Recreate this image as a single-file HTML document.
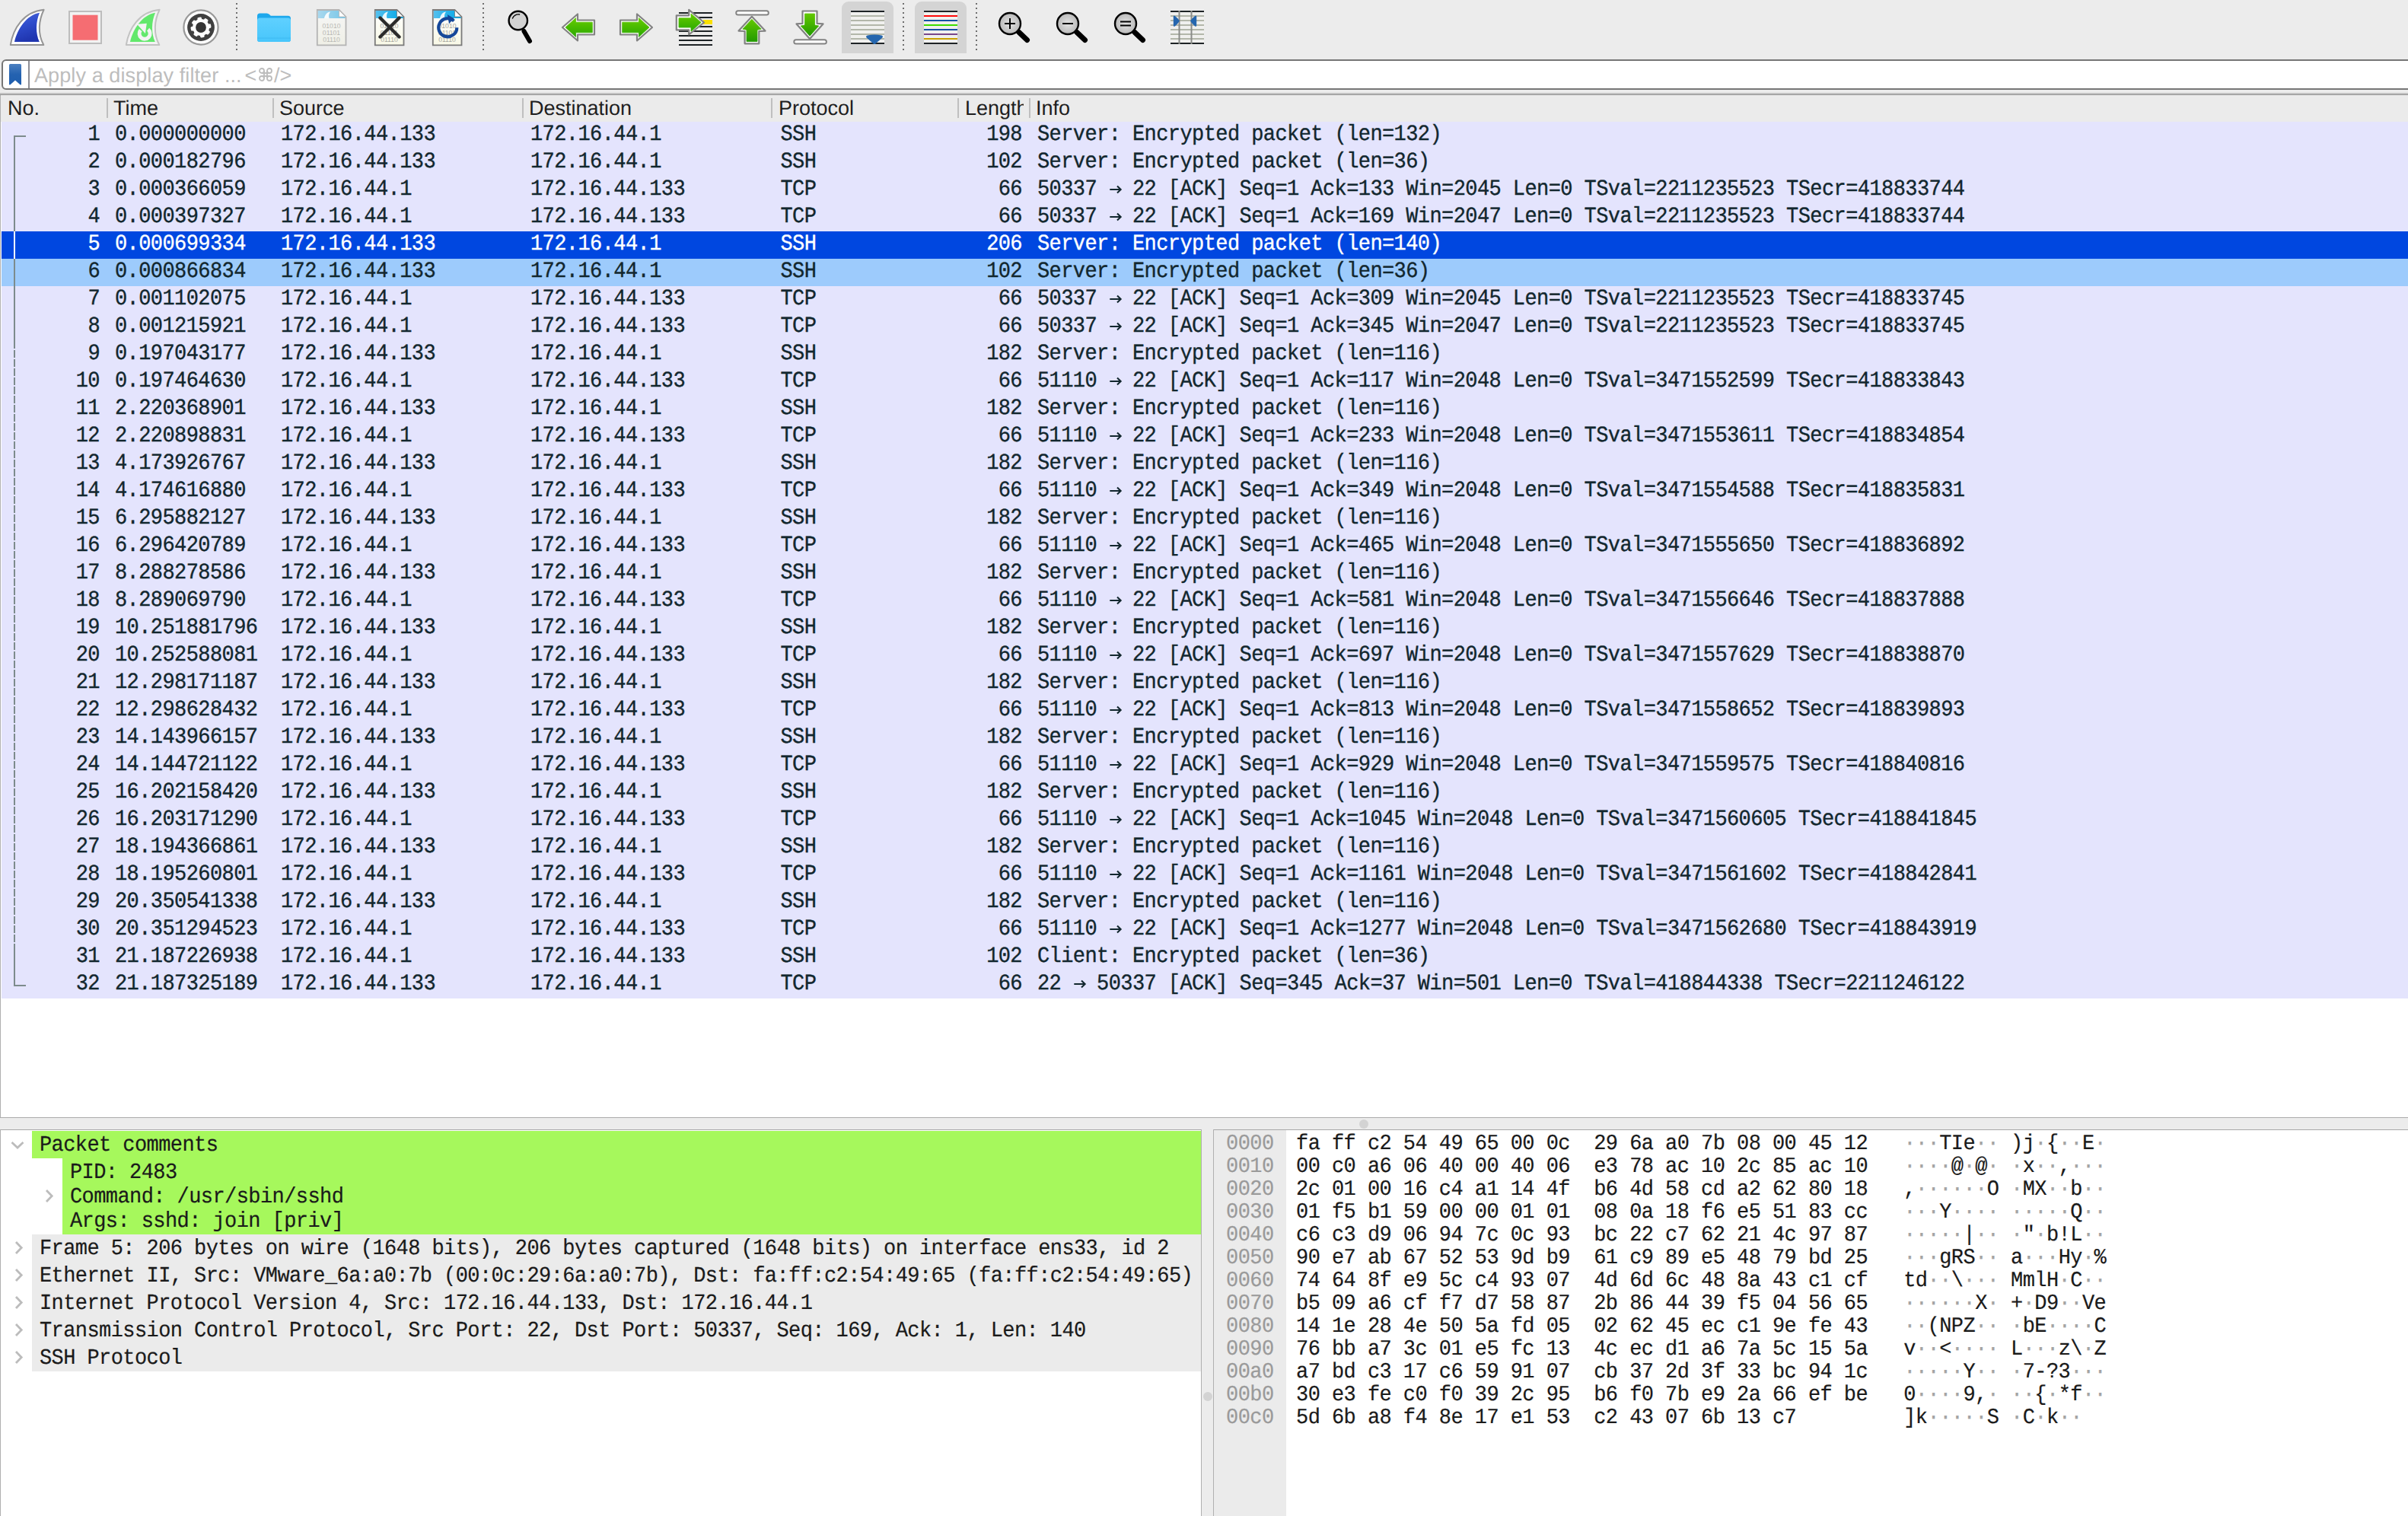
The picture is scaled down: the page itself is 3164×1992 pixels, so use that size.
<!DOCTYPE html><html><head><meta charset="utf-8"><title>Wireshark</title><style>

html,body{margin:0;padding:0;}
body{width:3164px;height:1992px;overflow:hidden;background:#ececec;position:relative;font-family:"Liberation Sans", sans-serif;text-rendering:geometricPrecision;}
.a{position:absolute;}
.t{position:absolute;white-space:pre;}
.pl{-webkit-text-stroke:0.35px currentColor;font-family:"Liberation Mono", monospace;font-size:27px;letter-spacing:-0.582px;line-height:36px;height:36px;color:#12272e;transform:scaleY(1.08);transform-origin:0 25.18px;}
.dt{-webkit-text-stroke:0.2px currentColor;font-family:"Liberation Mono", monospace;font-size:27px;letter-spacing:-0.582px;line-height:36px;height:36px;color:#1a1a1a;transform:scaleY(1.07);transform-origin:0 25.18px;}
.hx{-webkit-text-stroke:0.2px currentColor;font-family:"Liberation Mono", monospace;font-size:27px;letter-spacing:-0.552px;line-height:30px;height:30px;color:#1a1a1a;transform:scaleY(1.055);transform-origin:0 22.18px;}
.arw{position:relative;top:-3px;font-weight:bold;}
.dot{color:#a4a4a4;}
.hd{font-family:"Liberation Sans", sans-serif;font-size:27px;line-height:36px;height:36px;color:#1e1e1e;}

</style></head><body>
<div class="a" style="left:0;top:0;width:3164px;height:78px;background:#ececec;"></div>
<div class="a" style="left:1106px;top:2px;width:68px;height:68px;background:#d4d4d4;border-radius:9px 9px 0 0;"></div>
<div class="a" style="left:1202px;top:2px;width:68px;height:68px;background:#d4d4d4;border-radius:9px 9px 0 0;"></div>
<svg class="a" style="left:0;top:0" width="1600" height="78" viewBox="0 0 1600 78"><defs>
<linearGradient id="gblue" x1="0" y1="0" x2="0.3" y2="1"><stop offset="0" stop-color="#4c68d8"/><stop offset="0.5" stop-color="#2e4ccc"/><stop offset="1" stop-color="#2036b0"/></linearGradient>
<linearGradient id="garrow" x1="0" y1="0" x2="0" y2="1"><stop offset="0" stop-color="#66cc00"/><stop offset="1" stop-color="#2aa800"/></linearGradient>
<linearGradient id="garrowv" x1="0" y1="0" x2="0" y2="1"><stop offset="0" stop-color="#62c800"/><stop offset="1" stop-color="#239a00"/></linearGradient>
<radialGradient id="glens" cx="0.5" cy="0.5" r="0.55"><stop offset="0" stop-color="#e4e4e4"/><stop offset="1" stop-color="#b4b4b4"/></radialGradient>
<linearGradient id="gfold" x1="0" y1="0" x2="0" y2="1"><stop offset="0" stop-color="#5fd0ff"/><stop offset="1" stop-color="#48c6fb"/></linearGradient>
<linearGradient id="gdocbody" x1="0" y1="0" x2="0" y2="1"><stop offset="0" stop-color="#ffffff"/><stop offset="1" stop-color="#f8f8e6"/></linearGradient>
<linearGradient id="gdocbody2" x1="0" y1="0" x2="0" y2="1"><stop offset="0" stop-color="#f6f6f6"/><stop offset="1" stop-color="#efefe6"/></linearGradient>
<linearGradient id="gband" x1="0" y1="0" x2="1" y2="0"><stop offset="0" stop-color="#55c0ee"/><stop offset="1" stop-color="#00a6e6"/></linearGradient>
<linearGradient id="gband2" x1="0" y1="0" x2="1" y2="0"><stop offset="0" stop-color="#a8d8ee"/><stop offset="1" stop-color="#78c6e8"/></linearGradient>
</defs><path d="M13.8,59 C17.5,37 31,15.5 57.6,12.8 C50.8,27 49.2,44 57.3,59 Z" fill="#ffffff" stroke="#959595" stroke-width="2" stroke-linejoin="round"/><path d="M19,55 C23,38 34.5,20 52,16.8 C46.8,29 46.6,44 51.8,55 Z" fill="url(#gblue)"/><rect x="91" y="15" width="42" height="42" fill="#f2f2f2" stroke="#bdbdbd" stroke-width="2"/><rect x="95.5" y="19.7" width="33" height="33" fill="#f56d72"/><path d="M165.8,59 C169.5,37 183,15.5 209.6,12.8 C202.8,27 201.2,44 209.3,59 Z" fill="#f3f3f3" stroke="#c2c2c2" stroke-width="2" stroke-linejoin="round"/><path d="M171,55 C175,38 186.5,20 204,16.8 C198.8,29 198.6,44 203.8,55 Z" fill="#62e86c"/><path d="M194.6,38.7 A7.05,7.05 0 1 1 184.7,39.6" fill="none" stroke="#f3f3f3" stroke-width="4.9"/><polygon points="180,31.8 192.8,30.8 190.9,44.1" fill="#f3f3f3"/><circle cx="264" cy="36" r="22.6" fill="#ffffff" stroke="#999999" stroke-width="2.2"/><circle cx="264" cy="36" r="17.9" fill="#404040"/><circle cx="264" cy="36" r="11.0" fill="#ffffff"/><rect x="261.2" y="22.6" width="5.6" height="7" rx="1.6" fill="#ffffff" transform="rotate(-9 264 36)"/><rect x="261.2" y="22.6" width="5.6" height="7" rx="1.6" fill="#ffffff" transform="rotate(36 264 36)"/><rect x="261.2" y="22.6" width="5.6" height="7" rx="1.6" fill="#ffffff" transform="rotate(81 264 36)"/><rect x="261.2" y="22.6" width="5.6" height="7" rx="1.6" fill="#ffffff" transform="rotate(126 264 36)"/><rect x="261.2" y="22.6" width="5.6" height="7" rx="1.6" fill="#ffffff" transform="rotate(171 264 36)"/><rect x="261.2" y="22.6" width="5.6" height="7" rx="1.6" fill="#ffffff" transform="rotate(216 264 36)"/><rect x="261.2" y="22.6" width="5.6" height="7" rx="1.6" fill="#ffffff" transform="rotate(261 264 36)"/><rect x="261.2" y="22.6" width="5.6" height="7" rx="1.6" fill="#ffffff" transform="rotate(306 264 36)"/><circle cx="264" cy="36" r="6.9" fill="#353535"/><rect x="310" y="4" width="2" height="2" fill="#6f6f6f"/><rect x="310" y="10" width="2" height="2" fill="#6f6f6f"/><rect x="310" y="16" width="2" height="2" fill="#6f6f6f"/><rect x="310" y="22" width="2" height="2" fill="#6f6f6f"/><rect x="310" y="28" width="2" height="2" fill="#6f6f6f"/><rect x="310" y="34" width="2" height="2" fill="#6f6f6f"/><rect x="310" y="40" width="2" height="2" fill="#6f6f6f"/><rect x="310" y="46" width="2" height="2" fill="#6f6f6f"/><rect x="310" y="52" width="2" height="2" fill="#6f6f6f"/><rect x="310" y="58" width="2" height="2" fill="#6f6f6f"/><rect x="310" y="64" width="2" height="2" fill="#6f6f6f"/><path d="M338,21 Q338,17.5 341.5,17.5 L350.5,17.5 Q352.5,17.5 354,19 L355.8,20.8 L378.5,20.8 Q382,20.8 382,24.3 L382,51.5 Q382,55 378.5,55 L341.5,55 Q338,55 338,51.5 Z" fill="#1ea8ec"/><path d="M338,27 Q338,23.5 341.5,23.5 L378.5,23.5 Q382,23.5 382,27 L382,51.5 Q382,55 378.5,55 L341.5,55 Q338,55 338,51.5 Z" fill="url(#gfold)"/><rect x="338" y="49.5" width="44" height="1.2" fill="#3cb8f0" opacity="0.7"/><path d="M416.8,13 L445.5,13 L454.5,22 L454.5,59.4 L416.8,59.4 Z" fill="url(#gdocbody2)" stroke="#b4b4b4" stroke-width="1.8" stroke-linejoin="miter"/><path d="M417.8,14 L445.0,14 L453.7,22.5 L453.7,24 L417.8,24 Z" fill="url(#gband2)"/><path d="M445.5,13.5 L445.5,22 L454.0,22 Z" fill="#ffffff" stroke="#b4b4b4" stroke-width="0.8"/><path d="M426,24 C427,19 430,16 434,15.5 C432,18 431.5,21 432.5,24 Z" fill="#ffffff" opacity="0.9"/><text x="435.5" y="37" font-family="Liberation Sans, sans-serif" font-size="8.6" text-anchor="middle" fill="#b8b8b4">01010</text><text x="435.5" y="46" font-family="Liberation Sans, sans-serif" font-size="8.6" text-anchor="middle" fill="#b8b8b4">01101</text><text x="435.5" y="55" font-family="Liberation Sans, sans-serif" font-size="8.6" text-anchor="middle" fill="#b8b8b4">01110</text><path d="M492.8,13 L521.5,13 L530.5,22 L530.5,59.4 L492.8,59.4 Z" fill="url(#gdocbody)" stroke="#7a7a7a" stroke-width="1.8" stroke-linejoin="miter"/><path d="M493.8,14 L521.0,14 L529.7,22.5 L529.7,24 L493.8,24 Z" fill="url(#gband)"/><path d="M521.5,13.5 L521.5,22 L530.0,22 Z" fill="#ffffff" stroke="#7a7a7a" stroke-width="0.8"/><path d="M502,24 C503,19 506,16 510,15.5 C508,18 507.5,21 508.5,24 Z" fill="#ffffff" opacity="0.9"/><text x="511.5" y="37" font-family="Liberation Sans, sans-serif" font-size="8.6" text-anchor="middle" fill="#a4a49c">01010</text><text x="511.5" y="46" font-family="Liberation Sans, sans-serif" font-size="8.6" text-anchor="middle" fill="#a4a49c">01101</text><text x="511.5" y="55" font-family="Liberation Sans, sans-serif" font-size="8.6" text-anchor="middle" fill="#a4a49c">01110</text><path d="M499.5,23.5 L524.5,48.5 M524.5,23.5 L499.5,48.5" stroke="#2b2b2b" stroke-width="4.4" stroke-linecap="round"/><path d="M568.8,13 L597.5,13 L606.5,22 L606.5,59.4 L568.8,59.4 Z" fill="url(#gdocbody)" stroke="#7a7a7a" stroke-width="1.8" stroke-linejoin="miter"/><path d="M569.8,14 L597.0,14 L605.7,22.5 L605.7,24 L569.8,24 Z" fill="url(#gband)"/><path d="M597.5,13.5 L597.5,22 L606.0,22 Z" fill="#ffffff" stroke="#7a7a7a" stroke-width="0.8"/><path d="M578,24 C579,19 582,16 586,15.5 C584,18 583.5,21 584.5,24 Z" fill="#ffffff" opacity="0.9"/><text x="587.5" y="37" font-family="Liberation Sans, sans-serif" font-size="8.6" text-anchor="middle" fill="#a4a49c">01010</text><text x="587.5" y="46" font-family="Liberation Sans, sans-serif" font-size="8.6" text-anchor="middle" fill="#a4a49c">01101</text><text x="587.5" y="55" font-family="Liberation Sans, sans-serif" font-size="8.6" text-anchor="middle" fill="#a4a49c">01110</text><path d="M596.5,27.5 A12,12 0 1 0 600.3,36.2" fill="none" stroke="#15489a" stroke-width="4.2"/><path d="M587.8,19 L596.5,24.2 L590,31.2 Z" fill="#15489a"/><rect x="634" y="4" width="2" height="2" fill="#6f6f6f"/><rect x="634" y="10" width="2" height="2" fill="#6f6f6f"/><rect x="634" y="16" width="2" height="2" fill="#6f6f6f"/><rect x="634" y="22" width="2" height="2" fill="#6f6f6f"/><rect x="634" y="28" width="2" height="2" fill="#6f6f6f"/><rect x="634" y="34" width="2" height="2" fill="#6f6f6f"/><rect x="634" y="40" width="2" height="2" fill="#6f6f6f"/><rect x="634" y="46" width="2" height="2" fill="#6f6f6f"/><rect x="634" y="52" width="2" height="2" fill="#6f6f6f"/><rect x="634" y="58" width="2" height="2" fill="#6f6f6f"/><rect x="634" y="64" width="2" height="2" fill="#6f6f6f"/><path d="M688.5,41 L696,54" stroke="#000" stroke-width="6" stroke-linecap="round"/><circle cx="680.8" cy="27" r="12.2" fill="#d2d2d2" stroke="#000" stroke-width="2.4"/><path d="M673.5,24 A8,8 0 0 1 682.5,19" fill="none" stroke="#000" stroke-width="1.4" stroke-linecap="round"/><polygon points="739.00,36.00 759.00,18.50 759.00,26.50 781.00,26.50 781.00,45.50 759.00,45.50 759.00,53.50" fill="#ffffff" stroke="#828282" stroke-width="2.2" stroke-linejoin="round"/><polygon points="743.00,36.00 756.60,23.50 756.60,29.20 778.30,29.20 778.30,42.80 756.60,42.80 756.60,48.50" fill="url(#garrow)" stroke="url(#garrow)" stroke-width="0.8" stroke-linejoin="round"/><polygon points="857.00,36.00 837.00,18.50 837.00,26.50 815.00,26.50 815.00,45.50 837.00,45.50 837.00,53.50" fill="#ffffff" stroke="#828282" stroke-width="2.2" stroke-linejoin="round"/><polygon points="853.00,36.00 839.40,23.50 839.40,29.20 817.70,29.20 817.70,42.80 839.40,42.80 839.40,48.50" fill="url(#garrow)" stroke="url(#garrow)" stroke-width="0.8" stroke-linejoin="round"/><rect x="892" y="16" width="44" height="2" fill="#1e2326"/><rect x="892" y="22" width="44" height="2" fill="#1e2326"/><rect x="892" y="28" width="44" height="2" fill="#1e2326"/><rect x="892" y="34" width="44" height="2" fill="#1e2326"/><rect x="892" y="40" width="44" height="2" fill="#1e2326"/><rect x="892" y="46" width="44" height="2" fill="#1e2326"/><rect x="892" y="52" width="44" height="2" fill="#1e2326"/><rect x="892" y="58" width="44" height="2" fill="#1e2326"/><rect x="924" y="26" width="12" height="6" fill="#f9e000"/><polygon points="888.8,20.3 905.2,20.3 905.2,12.8 925,29.5 905.2,45.5 905.2,39.4 888.8,39.4" fill="#ffffff" stroke="#828282" stroke-width="2.2" stroke-linejoin="round"/><polygon points="892,23.8 908,23.8 908,18 921.2,29.5 908,41.2 908,36 892,36" fill="url(#garrow)" stroke="url(#garrow)" stroke-width="0.8" stroke-linejoin="round"/><rect x="967.2" y="14.3" width="42.6" height="5.2" rx="2.6" fill="#ffffff" stroke="#828282" stroke-width="1.9"/><polygon points="987.9,21.8 1005.5,40.6 997.3,41 997.3,57.3 978.6,57.3 978.6,41 970.5,40.6" fill="#ffffff" stroke="#828282" stroke-width="2.2" stroke-linejoin="round"/><polygon points="987.9,25.2 1000.3,38.2 995,39.2 995,54.5 981,54.5 981,39.2 975.8,38.2" fill="url(#garrowv)" stroke="url(#garrowv)" stroke-width="0.8" stroke-linejoin="round"/><polygon points="1054.5,14.5 1073.5,14.5 1073.5,30.8 1081.5,31.4 1064,51 1046.5,31.4 1054.5,30.8" fill="#ffffff" stroke="#828282" stroke-width="2.2" stroke-linejoin="round"/><polygon points="1057.5,18 1070.5,18 1070.5,33 1075.8,34 1064,47.2 1052.2,34 1057.5,33" fill="url(#garrowv)" stroke="url(#garrowv)" stroke-width="0.8" stroke-linejoin="round"/><rect x="1043.3" y="52.3" width="42.6" height="5.2" rx="2.6" fill="#ffffff" stroke="#828282" stroke-width="1.9"/><rect x="1118" y="14" width="44" height="44" fill="#f0f0ee"/><rect x="1118" y="20" width="44" height="2" fill="#b3b7aa"/><rect x="1118" y="26" width="44" height="2" fill="#b3b7aa"/><rect x="1118" y="32" width="44" height="2" fill="#b3b7aa"/><rect x="1118" y="38" width="44" height="2" fill="#b3b7aa"/><rect x="1118" y="44" width="44" height="2" fill="#b3b7aa"/><rect x="1118" y="50" width="44" height="2" fill="#b3b7aa"/><rect x="1118" y="14" width="44" height="2" fill="#1e2326"/><rect x="1118" y="56" width="44" height="2" fill="#1e2326"/><path d="M1139.8,46.6 Q1149,44.2 1158.2,46.6 Q1161,47.6 1159.4,49.6 L1150.3,57.4 Q1149,58.6 1147.7,57.4 L1138.6,49.6 Q1137,47.6 1139.8,46.6 Z" fill="#2566ae"/><rect x="1186" y="4" width="2" height="2" fill="#6f6f6f"/><rect x="1186" y="10" width="2" height="2" fill="#6f6f6f"/><rect x="1186" y="16" width="2" height="2" fill="#6f6f6f"/><rect x="1186" y="22" width="2" height="2" fill="#6f6f6f"/><rect x="1186" y="28" width="2" height="2" fill="#6f6f6f"/><rect x="1186" y="34" width="2" height="2" fill="#6f6f6f"/><rect x="1186" y="40" width="2" height="2" fill="#6f6f6f"/><rect x="1186" y="46" width="2" height="2" fill="#6f6f6f"/><rect x="1186" y="52" width="2" height="2" fill="#6f6f6f"/><rect x="1186" y="58" width="2" height="2" fill="#6f6f6f"/><rect x="1186" y="64" width="2" height="2" fill="#6f6f6f"/><rect x="1214" y="14" width="44" height="44" fill="#f0f0ee"/><rect x="1214" y="14" width="44" height="2" fill="#1e2326"/><rect x="1214" y="20" width="44" height="2" fill="#ff0a0a"/><rect x="1214" y="26" width="44" height="2" fill="#1452a4"/><rect x="1214" y="32" width="44" height="2" fill="#3edc00"/><rect x="1214" y="38" width="44" height="2" fill="#1452a4"/><rect x="1214" y="44" width="44" height="2" fill="#7a468a"/><rect x="1214" y="50" width="44" height="2" fill="#caa000"/><rect x="1214" y="56" width="44" height="2" fill="#1e2326"/><rect x="1282" y="4" width="2" height="2" fill="#6f6f6f"/><rect x="1282" y="10" width="2" height="2" fill="#6f6f6f"/><rect x="1282" y="16" width="2" height="2" fill="#6f6f6f"/><rect x="1282" y="22" width="2" height="2" fill="#6f6f6f"/><rect x="1282" y="28" width="2" height="2" fill="#6f6f6f"/><rect x="1282" y="34" width="2" height="2" fill="#6f6f6f"/><rect x="1282" y="40" width="2" height="2" fill="#6f6f6f"/><rect x="1282" y="46" width="2" height="2" fill="#6f6f6f"/><rect x="1282" y="52" width="2" height="2" fill="#6f6f6f"/><rect x="1282" y="58" width="2" height="2" fill="#6f6f6f"/><rect x="1282" y="64" width="2" height="2" fill="#6f6f6f"/><path d="M1339,42.5 L1349.5,52.5" stroke="#000" stroke-width="7" stroke-linecap="round"/><circle cx="1327" cy="31" r="14" fill="url(#glens)" stroke="#000" stroke-width="2.4"/><path d="M1320,31 L1334,31 M1327,24 L1327,38" stroke="#000" stroke-width="2"/><path d="M1415,42.5 L1425.5,52.5" stroke="#000" stroke-width="7" stroke-linecap="round"/><circle cx="1403" cy="31" r="14" fill="url(#glens)" stroke="#000" stroke-width="2.4"/><path d="M1396,31 L1410,31" stroke="#000" stroke-width="2"/><path d="M1491,42.5 L1501.5,52.5" stroke="#000" stroke-width="7" stroke-linecap="round"/><circle cx="1479" cy="31" r="14" fill="url(#glens)" stroke="#000" stroke-width="2.4"/><path d="M1472,28.5 L1486,28.5 M1472,33.5 L1486,33.5" stroke="#000" stroke-width="2"/><rect x="1538" y="14" width="44" height="44" fill="#f0f0ee"/><rect x="1538" y="20" width="44" height="2" fill="#b3b7aa"/><rect x="1538" y="26" width="44" height="2" fill="#b3b7aa"/><rect x="1538" y="32" width="44" height="2" fill="#b3b7aa"/><rect x="1538" y="38" width="44" height="2" fill="#b3b7aa"/><rect x="1538" y="44" width="44" height="2" fill="#b3b7aa"/><rect x="1538" y="50" width="44" height="2" fill="#b3b7aa"/><rect x="1538" y="14" width="44" height="2" fill="#1e2326"/><rect x="1538" y="56" width="44" height="2" fill="#1e2326"/><rect x="1548.5" y="14" width="2" height="44" fill="#8a8c88"/><rect x="1564.5" y="14" width="2" height="44" fill="#8a8c88"/><path d="M1541.8,22.2 Q1541.8,19.8 1543.8,21 Q1547.5,23.5 1550,27.6 Q1547.5,31.8 1543.8,34.4 Q1541.8,35.6 1541.8,33.2 Z" fill="#2566ae"/><path d="M1572.2,22.2 Q1572.2,19.8 1570.2,21 Q1566.5,23.5 1564,27.6 Q1566.5,31.8 1570.2,34.4 Q1572.2,35.6 1572.2,33.2 Z" fill="#2566ae"/></svg>
<div class="a" style="left:2px;top:78px;width:3200px;height:36px;background:#fff;border:2px solid #767676;border-radius:6px;"></div>
<div class="a" style="left:37px;top:80px;width:2px;height:36px;background:#8e8e94;"></div>
<svg class="a" style="left:0;top:78px" width="40" height="40" viewBox="0 78 40 40"><defs><linearGradient id="bm" x1="0" y1="0" x2="0" y2="1"><stop offset="0" stop-color="#4b7fc0"/><stop offset="0.5" stop-color="#2462b0"/><stop offset="1" stop-color="#1f5eae"/></linearGradient></defs><path d="M12,85.5 Q12,84 13.5,84 L26.5,84 Q28,84 28,85.5 L28,110.2 Q28,112.4 26.2,111 L20,105.6 L13.8,111 Q12,112.4 12,110.2 Z" fill="url(#bm)"/></svg>
<div class="t" style="left:45px;top:80.6px;font-size:27px;line-height:36px;color:#bdbdbd;letter-spacing:0.1px;">Apply a display filter ...</div>
<div class="t" style="left:321.5px;top:80.6px;font-size:27px;line-height:36px;color:#bdbdbd;">&lt;</div>
<svg class="a" style="left:338.9px;top:88.2px" width="20" height="20" viewBox="0 0 20 20"><g fill="none" stroke="#bdbdbd" stroke-width="1.8"><circle cx="5" cy="5" r="3"/><circle cx="15" cy="5" r="3"/><circle cx="5" cy="15" r="3"/><circle cx="15" cy="15" r="3"/><path d="M8,5 V15 M12,5 V15 M5,8 H15 M5,12 H15"/></g></svg>
<div class="t" style="left:360px;top:80.6px;font-size:27px;line-height:36px;color:#bdbdbd;">/&gt;</div>
<div class="a" style="left:0;top:122px;width:3164px;height:2px;background:#c2c2c2;"></div>
<div class="a" style="left:0;top:124px;width:3164px;height:1px;background:#939393;"></div>
<div class="a" style="left:0;top:125px;width:3164px;height:35px;background:#ebebeb;"></div>
<div class="a" style="left:0;top:125px;width:1px;height:1344px;background:#b0b0b0;"></div>
<div class="a" style="left:140px;top:129px;width:2px;height:26px;background:#bfbfbf;"></div>
<div class="a" style="left:358px;top:129px;width:2px;height:26px;background:#bfbfbf;"></div>
<div class="a" style="left:686px;top:129px;width:2px;height:26px;background:#bfbfbf;"></div>
<div class="a" style="left:1013px;top:129px;width:2px;height:26px;background:#bfbfbf;"></div>
<div class="a" style="left:1258px;top:129px;width:2px;height:26px;background:#bfbfbf;"></div>
<div class="a" style="left:1352px;top:129px;width:2px;height:26px;background:#bfbfbf;"></div>
<div class="t hd" style="left:10px;top:123.6px;">No.</div>
<div class="t hd" style="left:149px;top:123.6px;">Time</div>
<div class="t hd" style="left:367px;top:123.6px;">Source</div>
<div class="t hd" style="left:695px;top:123.6px;">Destination</div>
<div class="t hd" style="left:1023px;top:123.6px;">Protocol</div>
<div class="t hd" style="left:1268px;top:123.6px;width:77px;overflow:hidden;">Length</div>
<div class="t hd" style="left:1361px;top:123.6px;">Info</div>
<div class="a" style="left:1px;top:160px;width:3163px;height:1308px;background:#fff;"></div>
<div class="a" style="left:0;top:1468px;width:3164px;height:1px;background:#ababab;"></div>
<div class="a" style="left:2px;top:160px;width:3162px;height:36px;background:#e4e4fd;"></div>
<div class="t pl" style="left:0;width:131px;text-align:right;top:159.8px;">1</div>
<div class="t pl" style="left:151px;top:159.8px;">0.000000000</div>
<div class="t pl" style="left:369px;top:159.8px;">172.16.44.133</div>
<div class="t pl" style="left:697px;top:159.8px;">172.16.44.1</div>
<div class="t pl" style="left:1025.5px;top:159.8px;">SSH</div>
<div class="t pl" style="left:1200px;width:143px;text-align:right;top:159.8px;">198</div>
<div class="t pl" style="left:1363px;top:159.8px;">Server: Encrypted packet (len=132)</div>
<div class="a" style="left:2px;top:196px;width:3162px;height:36px;background:#e4e4fd;"></div>
<div class="t pl" style="left:0;width:131px;text-align:right;top:195.8px;">2</div>
<div class="t pl" style="left:151px;top:195.8px;">0.000182796</div>
<div class="t pl" style="left:369px;top:195.8px;">172.16.44.133</div>
<div class="t pl" style="left:697px;top:195.8px;">172.16.44.1</div>
<div class="t pl" style="left:1025.5px;top:195.8px;">SSH</div>
<div class="t pl" style="left:1200px;width:143px;text-align:right;top:195.8px;">102</div>
<div class="t pl" style="left:1363px;top:195.8px;">Server: Encrypted packet (len=36)</div>
<div class="a" style="left:2px;top:232px;width:3162px;height:36px;background:#e4e4fd;"></div>
<div class="t pl" style="left:0;width:131px;text-align:right;top:231.8px;">3</div>
<div class="t pl" style="left:151px;top:231.8px;">0.000366059</div>
<div class="t pl" style="left:369px;top:231.8px;">172.16.44.1</div>
<div class="t pl" style="left:697px;top:231.8px;">172.16.44.133</div>
<div class="t pl" style="left:1025.5px;top:231.8px;">TCP</div>
<div class="t pl" style="left:1200px;width:143px;text-align:right;top:231.8px;">66</div>
<div class="t pl" style="left:1363px;top:231.8px;">50337   22 [ACK] Seq=1 Ack=133 Win=2045 Len=0 TSval=2211235523 TSecr=418833744</div>
<svg class="a" style="left:1456.72px;top:242.80px" width="18" height="12" viewBox="0 0 18 12"><path d="M1.3,6 L15.6,6 M11,1.6 L15.6,6 L11,10.4" fill="none" stroke="#12272e" stroke-width="2.1" stroke-linecap="butt" stroke-linejoin="miter"/></svg>
<div class="a" style="left:2px;top:268px;width:3162px;height:36px;background:#e4e4fd;"></div>
<div class="t pl" style="left:0;width:131px;text-align:right;top:267.8px;">4</div>
<div class="t pl" style="left:151px;top:267.8px;">0.000397327</div>
<div class="t pl" style="left:369px;top:267.8px;">172.16.44.1</div>
<div class="t pl" style="left:697px;top:267.8px;">172.16.44.133</div>
<div class="t pl" style="left:1025.5px;top:267.8px;">TCP</div>
<div class="t pl" style="left:1200px;width:143px;text-align:right;top:267.8px;">66</div>
<div class="t pl" style="left:1363px;top:267.8px;">50337   22 [ACK] Seq=1 Ack=169 Win=2047 Len=0 TSval=2211235523 TSecr=418833744</div>
<svg class="a" style="left:1456.72px;top:278.80px" width="18" height="12" viewBox="0 0 18 12"><path d="M1.3,6 L15.6,6 M11,1.6 L15.6,6 L11,10.4" fill="none" stroke="#12272e" stroke-width="2.1" stroke-linecap="butt" stroke-linejoin="miter"/></svg>
<div class="a" style="left:2px;top:304px;width:3162px;height:36px;background:#0047e0;"></div>
<div class="t pl" style="left:0;width:131px;text-align:right;top:303.8px;color:#ffffff;">5</div>
<div class="t pl" style="left:151px;top:303.8px;color:#ffffff;">0.000699334</div>
<div class="t pl" style="left:369px;top:303.8px;color:#ffffff;">172.16.44.133</div>
<div class="t pl" style="left:697px;top:303.8px;color:#ffffff;">172.16.44.1</div>
<div class="t pl" style="left:1025.5px;top:303.8px;color:#ffffff;">SSH</div>
<div class="t pl" style="left:1200px;width:143px;text-align:right;top:303.8px;color:#ffffff;">206</div>
<div class="t pl" style="left:1363px;top:303.8px;color:#ffffff;">Server: Encrypted packet (len=140)</div>
<div class="a" style="left:2px;top:340px;width:3162px;height:36px;background:#9dcbfc;"></div>
<div class="t pl" style="left:0;width:131px;text-align:right;top:339.8px;">6</div>
<div class="t pl" style="left:151px;top:339.8px;">0.000866834</div>
<div class="t pl" style="left:369px;top:339.8px;">172.16.44.133</div>
<div class="t pl" style="left:697px;top:339.8px;">172.16.44.1</div>
<div class="t pl" style="left:1025.5px;top:339.8px;">SSH</div>
<div class="t pl" style="left:1200px;width:143px;text-align:right;top:339.8px;">102</div>
<div class="t pl" style="left:1363px;top:339.8px;">Server: Encrypted packet (len=36)</div>
<div class="a" style="left:2px;top:376px;width:3162px;height:36px;background:#e4e4fd;"></div>
<div class="t pl" style="left:0;width:131px;text-align:right;top:375.8px;">7</div>
<div class="t pl" style="left:151px;top:375.8px;">0.001102075</div>
<div class="t pl" style="left:369px;top:375.8px;">172.16.44.1</div>
<div class="t pl" style="left:697px;top:375.8px;">172.16.44.133</div>
<div class="t pl" style="left:1025.5px;top:375.8px;">TCP</div>
<div class="t pl" style="left:1200px;width:143px;text-align:right;top:375.8px;">66</div>
<div class="t pl" style="left:1363px;top:375.8px;">50337   22 [ACK] Seq=1 Ack=309 Win=2045 Len=0 TSval=2211235523 TSecr=418833745</div>
<svg class="a" style="left:1456.72px;top:386.80px" width="18" height="12" viewBox="0 0 18 12"><path d="M1.3,6 L15.6,6 M11,1.6 L15.6,6 L11,10.4" fill="none" stroke="#12272e" stroke-width="2.1" stroke-linecap="butt" stroke-linejoin="miter"/></svg>
<div class="a" style="left:2px;top:412px;width:3162px;height:36px;background:#e4e4fd;"></div>
<div class="t pl" style="left:0;width:131px;text-align:right;top:411.8px;">8</div>
<div class="t pl" style="left:151px;top:411.8px;">0.001215921</div>
<div class="t pl" style="left:369px;top:411.8px;">172.16.44.1</div>
<div class="t pl" style="left:697px;top:411.8px;">172.16.44.133</div>
<div class="t pl" style="left:1025.5px;top:411.8px;">TCP</div>
<div class="t pl" style="left:1200px;width:143px;text-align:right;top:411.8px;">66</div>
<div class="t pl" style="left:1363px;top:411.8px;">50337   22 [ACK] Seq=1 Ack=345 Win=2047 Len=0 TSval=2211235523 TSecr=418833745</div>
<svg class="a" style="left:1456.72px;top:422.80px" width="18" height="12" viewBox="0 0 18 12"><path d="M1.3,6 L15.6,6 M11,1.6 L15.6,6 L11,10.4" fill="none" stroke="#12272e" stroke-width="2.1" stroke-linecap="butt" stroke-linejoin="miter"/></svg>
<div class="a" style="left:2px;top:448px;width:3162px;height:36px;background:#e4e4fd;"></div>
<div class="t pl" style="left:0;width:131px;text-align:right;top:447.8px;">9</div>
<div class="t pl" style="left:151px;top:447.8px;">0.197043177</div>
<div class="t pl" style="left:369px;top:447.8px;">172.16.44.133</div>
<div class="t pl" style="left:697px;top:447.8px;">172.16.44.1</div>
<div class="t pl" style="left:1025.5px;top:447.8px;">SSH</div>
<div class="t pl" style="left:1200px;width:143px;text-align:right;top:447.8px;">182</div>
<div class="t pl" style="left:1363px;top:447.8px;">Server: Encrypted packet (len=116)</div>
<div class="a" style="left:2px;top:484px;width:3162px;height:36px;background:#e4e4fd;"></div>
<div class="t pl" style="left:0;width:131px;text-align:right;top:483.8px;">10</div>
<div class="t pl" style="left:151px;top:483.8px;">0.197464630</div>
<div class="t pl" style="left:369px;top:483.8px;">172.16.44.1</div>
<div class="t pl" style="left:697px;top:483.8px;">172.16.44.133</div>
<div class="t pl" style="left:1025.5px;top:483.8px;">TCP</div>
<div class="t pl" style="left:1200px;width:143px;text-align:right;top:483.8px;">66</div>
<div class="t pl" style="left:1363px;top:483.8px;">51110   22 [ACK] Seq=1 Ack=117 Win=2048 Len=0 TSval=3471552599 TSecr=418833843</div>
<svg class="a" style="left:1456.72px;top:494.80px" width="18" height="12" viewBox="0 0 18 12"><path d="M1.3,6 L15.6,6 M11,1.6 L15.6,6 L11,10.4" fill="none" stroke="#12272e" stroke-width="2.1" stroke-linecap="butt" stroke-linejoin="miter"/></svg>
<div class="a" style="left:2px;top:520px;width:3162px;height:36px;background:#e4e4fd;"></div>
<div class="t pl" style="left:0;width:131px;text-align:right;top:519.8px;">11</div>
<div class="t pl" style="left:151px;top:519.8px;">2.220368901</div>
<div class="t pl" style="left:369px;top:519.8px;">172.16.44.133</div>
<div class="t pl" style="left:697px;top:519.8px;">172.16.44.1</div>
<div class="t pl" style="left:1025.5px;top:519.8px;">SSH</div>
<div class="t pl" style="left:1200px;width:143px;text-align:right;top:519.8px;">182</div>
<div class="t pl" style="left:1363px;top:519.8px;">Server: Encrypted packet (len=116)</div>
<div class="a" style="left:2px;top:556px;width:3162px;height:36px;background:#e4e4fd;"></div>
<div class="t pl" style="left:0;width:131px;text-align:right;top:555.8px;">12</div>
<div class="t pl" style="left:151px;top:555.8px;">2.220898831</div>
<div class="t pl" style="left:369px;top:555.8px;">172.16.44.1</div>
<div class="t pl" style="left:697px;top:555.8px;">172.16.44.133</div>
<div class="t pl" style="left:1025.5px;top:555.8px;">TCP</div>
<div class="t pl" style="left:1200px;width:143px;text-align:right;top:555.8px;">66</div>
<div class="t pl" style="left:1363px;top:555.8px;">51110   22 [ACK] Seq=1 Ack=233 Win=2048 Len=0 TSval=3471553611 TSecr=418834854</div>
<svg class="a" style="left:1456.72px;top:566.80px" width="18" height="12" viewBox="0 0 18 12"><path d="M1.3,6 L15.6,6 M11,1.6 L15.6,6 L11,10.4" fill="none" stroke="#12272e" stroke-width="2.1" stroke-linecap="butt" stroke-linejoin="miter"/></svg>
<div class="a" style="left:2px;top:592px;width:3162px;height:36px;background:#e4e4fd;"></div>
<div class="t pl" style="left:0;width:131px;text-align:right;top:591.8px;">13</div>
<div class="t pl" style="left:151px;top:591.8px;">4.173926767</div>
<div class="t pl" style="left:369px;top:591.8px;">172.16.44.133</div>
<div class="t pl" style="left:697px;top:591.8px;">172.16.44.1</div>
<div class="t pl" style="left:1025.5px;top:591.8px;">SSH</div>
<div class="t pl" style="left:1200px;width:143px;text-align:right;top:591.8px;">182</div>
<div class="t pl" style="left:1363px;top:591.8px;">Server: Encrypted packet (len=116)</div>
<div class="a" style="left:2px;top:628px;width:3162px;height:36px;background:#e4e4fd;"></div>
<div class="t pl" style="left:0;width:131px;text-align:right;top:627.8px;">14</div>
<div class="t pl" style="left:151px;top:627.8px;">4.174616880</div>
<div class="t pl" style="left:369px;top:627.8px;">172.16.44.1</div>
<div class="t pl" style="left:697px;top:627.8px;">172.16.44.133</div>
<div class="t pl" style="left:1025.5px;top:627.8px;">TCP</div>
<div class="t pl" style="left:1200px;width:143px;text-align:right;top:627.8px;">66</div>
<div class="t pl" style="left:1363px;top:627.8px;">51110   22 [ACK] Seq=1 Ack=349 Win=2048 Len=0 TSval=3471554588 TSecr=418835831</div>
<svg class="a" style="left:1456.72px;top:638.80px" width="18" height="12" viewBox="0 0 18 12"><path d="M1.3,6 L15.6,6 M11,1.6 L15.6,6 L11,10.4" fill="none" stroke="#12272e" stroke-width="2.1" stroke-linecap="butt" stroke-linejoin="miter"/></svg>
<div class="a" style="left:2px;top:664px;width:3162px;height:36px;background:#e4e4fd;"></div>
<div class="t pl" style="left:0;width:131px;text-align:right;top:663.8px;">15</div>
<div class="t pl" style="left:151px;top:663.8px;">6.295882127</div>
<div class="t pl" style="left:369px;top:663.8px;">172.16.44.133</div>
<div class="t pl" style="left:697px;top:663.8px;">172.16.44.1</div>
<div class="t pl" style="left:1025.5px;top:663.8px;">SSH</div>
<div class="t pl" style="left:1200px;width:143px;text-align:right;top:663.8px;">182</div>
<div class="t pl" style="left:1363px;top:663.8px;">Server: Encrypted packet (len=116)</div>
<div class="a" style="left:2px;top:700px;width:3162px;height:36px;background:#e4e4fd;"></div>
<div class="t pl" style="left:0;width:131px;text-align:right;top:699.8px;">16</div>
<div class="t pl" style="left:151px;top:699.8px;">6.296420789</div>
<div class="t pl" style="left:369px;top:699.8px;">172.16.44.1</div>
<div class="t pl" style="left:697px;top:699.8px;">172.16.44.133</div>
<div class="t pl" style="left:1025.5px;top:699.8px;">TCP</div>
<div class="t pl" style="left:1200px;width:143px;text-align:right;top:699.8px;">66</div>
<div class="t pl" style="left:1363px;top:699.8px;">51110   22 [ACK] Seq=1 Ack=465 Win=2048 Len=0 TSval=3471555650 TSecr=418836892</div>
<svg class="a" style="left:1456.72px;top:710.80px" width="18" height="12" viewBox="0 0 18 12"><path d="M1.3,6 L15.6,6 M11,1.6 L15.6,6 L11,10.4" fill="none" stroke="#12272e" stroke-width="2.1" stroke-linecap="butt" stroke-linejoin="miter"/></svg>
<div class="a" style="left:2px;top:736px;width:3162px;height:36px;background:#e4e4fd;"></div>
<div class="t pl" style="left:0;width:131px;text-align:right;top:735.8px;">17</div>
<div class="t pl" style="left:151px;top:735.8px;">8.288278586</div>
<div class="t pl" style="left:369px;top:735.8px;">172.16.44.133</div>
<div class="t pl" style="left:697px;top:735.8px;">172.16.44.1</div>
<div class="t pl" style="left:1025.5px;top:735.8px;">SSH</div>
<div class="t pl" style="left:1200px;width:143px;text-align:right;top:735.8px;">182</div>
<div class="t pl" style="left:1363px;top:735.8px;">Server: Encrypted packet (len=116)</div>
<div class="a" style="left:2px;top:772px;width:3162px;height:36px;background:#e4e4fd;"></div>
<div class="t pl" style="left:0;width:131px;text-align:right;top:771.8px;">18</div>
<div class="t pl" style="left:151px;top:771.8px;">8.289069790</div>
<div class="t pl" style="left:369px;top:771.8px;">172.16.44.1</div>
<div class="t pl" style="left:697px;top:771.8px;">172.16.44.133</div>
<div class="t pl" style="left:1025.5px;top:771.8px;">TCP</div>
<div class="t pl" style="left:1200px;width:143px;text-align:right;top:771.8px;">66</div>
<div class="t pl" style="left:1363px;top:771.8px;">51110   22 [ACK] Seq=1 Ack=581 Win=2048 Len=0 TSval=3471556646 TSecr=418837888</div>
<svg class="a" style="left:1456.72px;top:782.80px" width="18" height="12" viewBox="0 0 18 12"><path d="M1.3,6 L15.6,6 M11,1.6 L15.6,6 L11,10.4" fill="none" stroke="#12272e" stroke-width="2.1" stroke-linecap="butt" stroke-linejoin="miter"/></svg>
<div class="a" style="left:2px;top:808px;width:3162px;height:36px;background:#e4e4fd;"></div>
<div class="t pl" style="left:0;width:131px;text-align:right;top:807.8px;">19</div>
<div class="t pl" style="left:151px;top:807.8px;">10.251881796</div>
<div class="t pl" style="left:369px;top:807.8px;">172.16.44.133</div>
<div class="t pl" style="left:697px;top:807.8px;">172.16.44.1</div>
<div class="t pl" style="left:1025.5px;top:807.8px;">SSH</div>
<div class="t pl" style="left:1200px;width:143px;text-align:right;top:807.8px;">182</div>
<div class="t pl" style="left:1363px;top:807.8px;">Server: Encrypted packet (len=116)</div>
<div class="a" style="left:2px;top:844px;width:3162px;height:36px;background:#e4e4fd;"></div>
<div class="t pl" style="left:0;width:131px;text-align:right;top:843.8px;">20</div>
<div class="t pl" style="left:151px;top:843.8px;">10.252588081</div>
<div class="t pl" style="left:369px;top:843.8px;">172.16.44.1</div>
<div class="t pl" style="left:697px;top:843.8px;">172.16.44.133</div>
<div class="t pl" style="left:1025.5px;top:843.8px;">TCP</div>
<div class="t pl" style="left:1200px;width:143px;text-align:right;top:843.8px;">66</div>
<div class="t pl" style="left:1363px;top:843.8px;">51110   22 [ACK] Seq=1 Ack=697 Win=2048 Len=0 TSval=3471557629 TSecr=418838870</div>
<svg class="a" style="left:1456.72px;top:854.80px" width="18" height="12" viewBox="0 0 18 12"><path d="M1.3,6 L15.6,6 M11,1.6 L15.6,6 L11,10.4" fill="none" stroke="#12272e" stroke-width="2.1" stroke-linecap="butt" stroke-linejoin="miter"/></svg>
<div class="a" style="left:2px;top:880px;width:3162px;height:36px;background:#e4e4fd;"></div>
<div class="t pl" style="left:0;width:131px;text-align:right;top:879.8px;">21</div>
<div class="t pl" style="left:151px;top:879.8px;">12.298171187</div>
<div class="t pl" style="left:369px;top:879.8px;">172.16.44.133</div>
<div class="t pl" style="left:697px;top:879.8px;">172.16.44.1</div>
<div class="t pl" style="left:1025.5px;top:879.8px;">SSH</div>
<div class="t pl" style="left:1200px;width:143px;text-align:right;top:879.8px;">182</div>
<div class="t pl" style="left:1363px;top:879.8px;">Server: Encrypted packet (len=116)</div>
<div class="a" style="left:2px;top:916px;width:3162px;height:36px;background:#e4e4fd;"></div>
<div class="t pl" style="left:0;width:131px;text-align:right;top:915.8px;">22</div>
<div class="t pl" style="left:151px;top:915.8px;">12.298628432</div>
<div class="t pl" style="left:369px;top:915.8px;">172.16.44.1</div>
<div class="t pl" style="left:697px;top:915.8px;">172.16.44.133</div>
<div class="t pl" style="left:1025.5px;top:915.8px;">TCP</div>
<div class="t pl" style="left:1200px;width:143px;text-align:right;top:915.8px;">66</div>
<div class="t pl" style="left:1363px;top:915.8px;">51110   22 [ACK] Seq=1 Ack=813 Win=2048 Len=0 TSval=3471558652 TSecr=418839893</div>
<svg class="a" style="left:1456.72px;top:926.80px" width="18" height="12" viewBox="0 0 18 12"><path d="M1.3,6 L15.6,6 M11,1.6 L15.6,6 L11,10.4" fill="none" stroke="#12272e" stroke-width="2.1" stroke-linecap="butt" stroke-linejoin="miter"/></svg>
<div class="a" style="left:2px;top:952px;width:3162px;height:36px;background:#e4e4fd;"></div>
<div class="t pl" style="left:0;width:131px;text-align:right;top:951.8px;">23</div>
<div class="t pl" style="left:151px;top:951.8px;">14.143966157</div>
<div class="t pl" style="left:369px;top:951.8px;">172.16.44.133</div>
<div class="t pl" style="left:697px;top:951.8px;">172.16.44.1</div>
<div class="t pl" style="left:1025.5px;top:951.8px;">SSH</div>
<div class="t pl" style="left:1200px;width:143px;text-align:right;top:951.8px;">182</div>
<div class="t pl" style="left:1363px;top:951.8px;">Server: Encrypted packet (len=116)</div>
<div class="a" style="left:2px;top:988px;width:3162px;height:36px;background:#e4e4fd;"></div>
<div class="t pl" style="left:0;width:131px;text-align:right;top:987.8px;">24</div>
<div class="t pl" style="left:151px;top:987.8px;">14.144721122</div>
<div class="t pl" style="left:369px;top:987.8px;">172.16.44.1</div>
<div class="t pl" style="left:697px;top:987.8px;">172.16.44.133</div>
<div class="t pl" style="left:1025.5px;top:987.8px;">TCP</div>
<div class="t pl" style="left:1200px;width:143px;text-align:right;top:987.8px;">66</div>
<div class="t pl" style="left:1363px;top:987.8px;">51110   22 [ACK] Seq=1 Ack=929 Win=2048 Len=0 TSval=3471559575 TSecr=418840816</div>
<svg class="a" style="left:1456.72px;top:998.80px" width="18" height="12" viewBox="0 0 18 12"><path d="M1.3,6 L15.6,6 M11,1.6 L15.6,6 L11,10.4" fill="none" stroke="#12272e" stroke-width="2.1" stroke-linecap="butt" stroke-linejoin="miter"/></svg>
<div class="a" style="left:2px;top:1024px;width:3162px;height:36px;background:#e4e4fd;"></div>
<div class="t pl" style="left:0;width:131px;text-align:right;top:1023.8px;">25</div>
<div class="t pl" style="left:151px;top:1023.8px;">16.202158420</div>
<div class="t pl" style="left:369px;top:1023.8px;">172.16.44.133</div>
<div class="t pl" style="left:697px;top:1023.8px;">172.16.44.1</div>
<div class="t pl" style="left:1025.5px;top:1023.8px;">SSH</div>
<div class="t pl" style="left:1200px;width:143px;text-align:right;top:1023.8px;">182</div>
<div class="t pl" style="left:1363px;top:1023.8px;">Server: Encrypted packet (len=116)</div>
<div class="a" style="left:2px;top:1060px;width:3162px;height:36px;background:#e4e4fd;"></div>
<div class="t pl" style="left:0;width:131px;text-align:right;top:1059.8px;">26</div>
<div class="t pl" style="left:151px;top:1059.8px;">16.203171290</div>
<div class="t pl" style="left:369px;top:1059.8px;">172.16.44.1</div>
<div class="t pl" style="left:697px;top:1059.8px;">172.16.44.133</div>
<div class="t pl" style="left:1025.5px;top:1059.8px;">TCP</div>
<div class="t pl" style="left:1200px;width:143px;text-align:right;top:1059.8px;">66</div>
<div class="t pl" style="left:1363px;top:1059.8px;">51110   22 [ACK] Seq=1 Ack=1045 Win=2048 Len=0 TSval=3471560605 TSecr=418841845</div>
<svg class="a" style="left:1456.72px;top:1070.80px" width="18" height="12" viewBox="0 0 18 12"><path d="M1.3,6 L15.6,6 M11,1.6 L15.6,6 L11,10.4" fill="none" stroke="#12272e" stroke-width="2.1" stroke-linecap="butt" stroke-linejoin="miter"/></svg>
<div class="a" style="left:2px;top:1096px;width:3162px;height:36px;background:#e4e4fd;"></div>
<div class="t pl" style="left:0;width:131px;text-align:right;top:1095.8px;">27</div>
<div class="t pl" style="left:151px;top:1095.8px;">18.194366861</div>
<div class="t pl" style="left:369px;top:1095.8px;">172.16.44.133</div>
<div class="t pl" style="left:697px;top:1095.8px;">172.16.44.1</div>
<div class="t pl" style="left:1025.5px;top:1095.8px;">SSH</div>
<div class="t pl" style="left:1200px;width:143px;text-align:right;top:1095.8px;">182</div>
<div class="t pl" style="left:1363px;top:1095.8px;">Server: Encrypted packet (len=116)</div>
<div class="a" style="left:2px;top:1132px;width:3162px;height:36px;background:#e4e4fd;"></div>
<div class="t pl" style="left:0;width:131px;text-align:right;top:1131.8px;">28</div>
<div class="t pl" style="left:151px;top:1131.8px;">18.195260801</div>
<div class="t pl" style="left:369px;top:1131.8px;">172.16.44.1</div>
<div class="t pl" style="left:697px;top:1131.8px;">172.16.44.133</div>
<div class="t pl" style="left:1025.5px;top:1131.8px;">TCP</div>
<div class="t pl" style="left:1200px;width:143px;text-align:right;top:1131.8px;">66</div>
<div class="t pl" style="left:1363px;top:1131.8px;">51110   22 [ACK] Seq=1 Ack=1161 Win=2048 Len=0 TSval=3471561602 TSecr=418842841</div>
<svg class="a" style="left:1456.72px;top:1142.80px" width="18" height="12" viewBox="0 0 18 12"><path d="M1.3,6 L15.6,6 M11,1.6 L15.6,6 L11,10.4" fill="none" stroke="#12272e" stroke-width="2.1" stroke-linecap="butt" stroke-linejoin="miter"/></svg>
<div class="a" style="left:2px;top:1168px;width:3162px;height:36px;background:#e4e4fd;"></div>
<div class="t pl" style="left:0;width:131px;text-align:right;top:1167.8px;">29</div>
<div class="t pl" style="left:151px;top:1167.8px;">20.350541338</div>
<div class="t pl" style="left:369px;top:1167.8px;">172.16.44.133</div>
<div class="t pl" style="left:697px;top:1167.8px;">172.16.44.1</div>
<div class="t pl" style="left:1025.5px;top:1167.8px;">SSH</div>
<div class="t pl" style="left:1200px;width:143px;text-align:right;top:1167.8px;">182</div>
<div class="t pl" style="left:1363px;top:1167.8px;">Server: Encrypted packet (len=116)</div>
<div class="a" style="left:2px;top:1204px;width:3162px;height:36px;background:#e4e4fd;"></div>
<div class="t pl" style="left:0;width:131px;text-align:right;top:1203.8px;">30</div>
<div class="t pl" style="left:151px;top:1203.8px;">20.351294523</div>
<div class="t pl" style="left:369px;top:1203.8px;">172.16.44.1</div>
<div class="t pl" style="left:697px;top:1203.8px;">172.16.44.133</div>
<div class="t pl" style="left:1025.5px;top:1203.8px;">TCP</div>
<div class="t pl" style="left:1200px;width:143px;text-align:right;top:1203.8px;">66</div>
<div class="t pl" style="left:1363px;top:1203.8px;">51110   22 [ACK] Seq=1 Ack=1277 Win=2048 Len=0 TSval=3471562680 TSecr=418843919</div>
<svg class="a" style="left:1456.72px;top:1214.80px" width="18" height="12" viewBox="0 0 18 12"><path d="M1.3,6 L15.6,6 M11,1.6 L15.6,6 L11,10.4" fill="none" stroke="#12272e" stroke-width="2.1" stroke-linecap="butt" stroke-linejoin="miter"/></svg>
<div class="a" style="left:2px;top:1240px;width:3162px;height:36px;background:#e4e4fd;"></div>
<div class="t pl" style="left:0;width:131px;text-align:right;top:1239.8px;">31</div>
<div class="t pl" style="left:151px;top:1239.8px;">21.187226938</div>
<div class="t pl" style="left:369px;top:1239.8px;">172.16.44.1</div>
<div class="t pl" style="left:697px;top:1239.8px;">172.16.44.133</div>
<div class="t pl" style="left:1025.5px;top:1239.8px;">SSH</div>
<div class="t pl" style="left:1200px;width:143px;text-align:right;top:1239.8px;">102</div>
<div class="t pl" style="left:1363px;top:1239.8px;">Client: Encrypted packet (len=36)</div>
<div class="a" style="left:2px;top:1276px;width:3162px;height:36px;background:#e4e4fd;"></div>
<div class="t pl" style="left:0;width:131px;text-align:right;top:1275.8px;">32</div>
<div class="t pl" style="left:151px;top:1275.8px;">21.187325189</div>
<div class="t pl" style="left:369px;top:1275.8px;">172.16.44.133</div>
<div class="t pl" style="left:697px;top:1275.8px;">172.16.44.1</div>
<div class="t pl" style="left:1025.5px;top:1275.8px;">TCP</div>
<div class="t pl" style="left:1200px;width:143px;text-align:right;top:1275.8px;">66</div>
<div class="t pl" style="left:1363px;top:1275.8px;">22   50337 [ACK] Seq=345 Ack=37 Win=501 Len=0 TSval=418844338 TSecr=2211246122</div>
<svg class="a" style="left:1409.86px;top:1286.80px" width="18" height="12" viewBox="0 0 18 12"><path d="M1.3,6 L15.6,6 M11,1.6 L15.6,6 L11,10.4" fill="none" stroke="#12272e" stroke-width="2.1" stroke-linecap="butt" stroke-linejoin="miter"/></svg>
<div class="a" style="left:18px;top:178px;width:16px;height:2px;background:#7d8b8c;"></div>
<div class="a" style="left:18px;top:178px;width:2px;height:126px;background:#7d8b8c;"></div>
<div class="a" style="left:18px;top:304px;width:2px;height:36px;background:#ffffff;"></div>
<div class="a" style="left:18px;top:340px;width:2px;height:108px;background:#7d8b8c;"></div>
<div class="a" style="left:18px;top:448px;width:2px;height:10px;background:#7d8b8c;"></div>
<div class="a" style="left:18px;top:460px;width:2px;height:10px;background:#7d8b8c;"></div>
<div class="a" style="left:18px;top:472px;width:2px;height:10px;background:#7d8b8c;"></div>
<div class="a" style="left:18px;top:484px;width:2px;height:10px;background:#7d8b8c;"></div>
<div class="a" style="left:18px;top:496px;width:2px;height:10px;background:#7d8b8c;"></div>
<div class="a" style="left:18px;top:508px;width:2px;height:10px;background:#7d8b8c;"></div>
<div class="a" style="left:18px;top:520px;width:2px;height:10px;background:#7d8b8c;"></div>
<div class="a" style="left:18px;top:532px;width:2px;height:10px;background:#7d8b8c;"></div>
<div class="a" style="left:18px;top:544px;width:2px;height:10px;background:#7d8b8c;"></div>
<div class="a" style="left:18px;top:556px;width:2px;height:10px;background:#7d8b8c;"></div>
<div class="a" style="left:18px;top:568px;width:2px;height:10px;background:#7d8b8c;"></div>
<div class="a" style="left:18px;top:580px;width:2px;height:10px;background:#7d8b8c;"></div>
<div class="a" style="left:18px;top:592px;width:2px;height:10px;background:#7d8b8c;"></div>
<div class="a" style="left:18px;top:604px;width:2px;height:10px;background:#7d8b8c;"></div>
<div class="a" style="left:18px;top:616px;width:2px;height:10px;background:#7d8b8c;"></div>
<div class="a" style="left:18px;top:628px;width:2px;height:10px;background:#7d8b8c;"></div>
<div class="a" style="left:18px;top:640px;width:2px;height:10px;background:#7d8b8c;"></div>
<div class="a" style="left:18px;top:652px;width:2px;height:10px;background:#7d8b8c;"></div>
<div class="a" style="left:18px;top:664px;width:2px;height:10px;background:#7d8b8c;"></div>
<div class="a" style="left:18px;top:676px;width:2px;height:10px;background:#7d8b8c;"></div>
<div class="a" style="left:18px;top:688px;width:2px;height:10px;background:#7d8b8c;"></div>
<div class="a" style="left:18px;top:700px;width:2px;height:10px;background:#7d8b8c;"></div>
<div class="a" style="left:18px;top:712px;width:2px;height:10px;background:#7d8b8c;"></div>
<div class="a" style="left:18px;top:724px;width:2px;height:10px;background:#7d8b8c;"></div>
<div class="a" style="left:18px;top:736px;width:2px;height:10px;background:#7d8b8c;"></div>
<div class="a" style="left:18px;top:748px;width:2px;height:10px;background:#7d8b8c;"></div>
<div class="a" style="left:18px;top:760px;width:2px;height:10px;background:#7d8b8c;"></div>
<div class="a" style="left:18px;top:772px;width:2px;height:10px;background:#7d8b8c;"></div>
<div class="a" style="left:18px;top:784px;width:2px;height:10px;background:#7d8b8c;"></div>
<div class="a" style="left:18px;top:796px;width:2px;height:10px;background:#7d8b8c;"></div>
<div class="a" style="left:18px;top:808px;width:2px;height:10px;background:#7d8b8c;"></div>
<div class="a" style="left:18px;top:820px;width:2px;height:10px;background:#7d8b8c;"></div>
<div class="a" style="left:18px;top:832px;width:2px;height:10px;background:#7d8b8c;"></div>
<div class="a" style="left:18px;top:844px;width:2px;height:10px;background:#7d8b8c;"></div>
<div class="a" style="left:18px;top:856px;width:2px;height:10px;background:#7d8b8c;"></div>
<div class="a" style="left:18px;top:868px;width:2px;height:10px;background:#7d8b8c;"></div>
<div class="a" style="left:18px;top:880px;width:2px;height:10px;background:#7d8b8c;"></div>
<div class="a" style="left:18px;top:892px;width:2px;height:10px;background:#7d8b8c;"></div>
<div class="a" style="left:18px;top:904px;width:2px;height:10px;background:#7d8b8c;"></div>
<div class="a" style="left:18px;top:916px;width:2px;height:10px;background:#7d8b8c;"></div>
<div class="a" style="left:18px;top:928px;width:2px;height:10px;background:#7d8b8c;"></div>
<div class="a" style="left:18px;top:940px;width:2px;height:10px;background:#7d8b8c;"></div>
<div class="a" style="left:18px;top:952px;width:2px;height:10px;background:#7d8b8c;"></div>
<div class="a" style="left:18px;top:964px;width:2px;height:10px;background:#7d8b8c;"></div>
<div class="a" style="left:18px;top:976px;width:2px;height:10px;background:#7d8b8c;"></div>
<div class="a" style="left:18px;top:988px;width:2px;height:10px;background:#7d8b8c;"></div>
<div class="a" style="left:18px;top:1000px;width:2px;height:10px;background:#7d8b8c;"></div>
<div class="a" style="left:18px;top:1012px;width:2px;height:10px;background:#7d8b8c;"></div>
<div class="a" style="left:18px;top:1024px;width:2px;height:10px;background:#7d8b8c;"></div>
<div class="a" style="left:18px;top:1036px;width:2px;height:10px;background:#7d8b8c;"></div>
<div class="a" style="left:18px;top:1048px;width:2px;height:10px;background:#7d8b8c;"></div>
<div class="a" style="left:18px;top:1060px;width:2px;height:10px;background:#7d8b8c;"></div>
<div class="a" style="left:18px;top:1072px;width:2px;height:10px;background:#7d8b8c;"></div>
<div class="a" style="left:18px;top:1084px;width:2px;height:10px;background:#7d8b8c;"></div>
<div class="a" style="left:18px;top:1096px;width:2px;height:10px;background:#7d8b8c;"></div>
<div class="a" style="left:18px;top:1108px;width:2px;height:10px;background:#7d8b8c;"></div>
<div class="a" style="left:18px;top:1120px;width:2px;height:10px;background:#7d8b8c;"></div>
<div class="a" style="left:18px;top:1132px;width:2px;height:10px;background:#7d8b8c;"></div>
<div class="a" style="left:18px;top:1144px;width:2px;height:10px;background:#7d8b8c;"></div>
<div class="a" style="left:18px;top:1156px;width:2px;height:10px;background:#7d8b8c;"></div>
<div class="a" style="left:18px;top:1168px;width:2px;height:10px;background:#7d8b8c;"></div>
<div class="a" style="left:18px;top:1180px;width:2px;height:10px;background:#7d8b8c;"></div>
<div class="a" style="left:18px;top:1192px;width:2px;height:10px;background:#7d8b8c;"></div>
<div class="a" style="left:18px;top:1204px;width:2px;height:10px;background:#7d8b8c;"></div>
<div class="a" style="left:18px;top:1216px;width:2px;height:10px;background:#7d8b8c;"></div>
<div class="a" style="left:18px;top:1228px;width:2px;height:10px;background:#7d8b8c;"></div>
<div class="a" style="left:18px;top:1240px;width:2px;height:56px;background:#7d8b8c;"></div>
<div class="a" style="left:18px;top:1294px;width:16px;height:2px;background:#7d8b8c;"></div>
<div class="a" style="left:1786px;top:1471px;width:12px;height:12px;border-radius:6px;background:#d3d3d3;"></div>
<div class="a" style="left:0;top:1484px;width:1579px;height:508px;background:#fff;"></div>
<div class="a" style="left:0;top:1484px;width:1579px;height:1px;background:#a8a8a8;"></div>
<div class="a" style="left:0;top:1484px;width:1px;height:508px;background:#b0b0b0;"></div>
<div class="a" style="left:1578px;top:1484px;width:1px;height:508px;background:#b0b0b0;"></div>
<div class="a" style="left:42px;top:1486px;width:1536px;height:36px;background:#a6f85c;"></div>
<div class="a" style="left:82px;top:1522px;width:1496px;height:100px;background:#a6f85c;"></div>
<div class="a" style="left:42px;top:1622px;width:1536px;height:180px;background:#ebebeb;"></div>
<div class="t dt" style="left:52px;top:1487.8px;">Packet comments</div>
<div class="t dt" style="left:92px;top:1523.8px;">PID: 2483</div>
<div class="t dt" style="left:92px;top:1555.8px;">Command: /usr/sbin/sshd</div>
<div class="t dt" style="left:92px;top:1587.8px;">Args: sshd: join [priv]</div>
<div class="t dt" style="left:52px;top:1623.8px;">Frame 5: 206 bytes on wire (1648 bits), 206 bytes captured (1648 bits) on interface ens33, id 2</div>
<div class="t dt" style="left:52px;top:1659.8px;">Ethernet II, Src: VMware_6a:a0:7b (00:0c:29:6a:a0:7b), Dst: fa:ff:c2:54:49:65 (fa:ff:c2:54:49:65)</div>
<div class="t dt" style="left:52px;top:1695.8px;">Internet Protocol Version 4, Src: 172.16.44.133, Dst: 172.16.44.1</div>
<div class="t dt" style="left:52px;top:1731.8px;">Transmission Control Protocol, Src Port: 22, Dst Port: 50337, Seq: 169, Ack: 1, Len: 140</div>
<div class="t dt" style="left:52px;top:1767.8px;">SSH Protocol</div>
<svg class="a" style="left:0;top:1484px" width="100" height="320" viewBox="0 1484 100 320"><path d="M15.5,1501 L23,1508 L30.5,1501" fill="none" stroke="#bcbcbc" stroke-width="2.8" stroke-linecap="butt" stroke-linejoin="miter"/><path d="M61,1564 L68.2,1571.5 L61,1579" fill="none" stroke="#bcbcbc" stroke-width="2.8" stroke-linecap="butt" stroke-linejoin="miter"/><path d="M21,1632 L28.2,1639.5 L21,1647" fill="none" stroke="#bcbcbc" stroke-width="2.8" stroke-linecap="butt" stroke-linejoin="miter"/><path d="M21,1668 L28.2,1675.5 L21,1683" fill="none" stroke="#bcbcbc" stroke-width="2.8" stroke-linecap="butt" stroke-linejoin="miter"/><path d="M21,1704 L28.2,1711.5 L21,1719" fill="none" stroke="#bcbcbc" stroke-width="2.8" stroke-linecap="butt" stroke-linejoin="miter"/><path d="M21,1740 L28.2,1747.5 L21,1755" fill="none" stroke="#bcbcbc" stroke-width="2.8" stroke-linecap="butt" stroke-linejoin="miter"/><path d="M21,1776 L28.2,1783.5 L21,1791" fill="none" stroke="#bcbcbc" stroke-width="2.8" stroke-linecap="butt" stroke-linejoin="miter"/></svg>
<div class="a" style="left:1581px;top:1829px;width:12px;height:12px;border-radius:6px;background:#d3d3d3;"></div>
<div class="a" style="left:1594px;top:1484px;width:1570px;height:508px;background:#fff;"></div>
<div class="a" style="left:1594px;top:1484px;width:1570px;height:1px;background:#a8a8a8;"></div>
<div class="a" style="left:1594px;top:1484px;width:1px;height:508px;background:#b0b0b0;"></div>
<div class="a" style="left:1595px;top:1485px;width:95px;height:507px;background:#ebebeb;"></div>
<div class="t hx" style="left:1611px;top:1488.8px;color:#9a9a9a;">0000</div>
<div class="t hx" style="left:1703px;top:1488.8px;">fa ff c2 54 49 65 00 0c</div>
<div class="t hx" style="left:2094.2px;top:1488.8px;">29 6a a0 7b 08 00 45 12</div>
<div class="t hx" style="left:2501.2px;top:1488.8px;"><span class="dot">·</span><span class="dot">·</span><span class="dot">·</span>TIe<span class="dot">·</span><span class="dot">·</span></div>
<div class="t hx" style="left:2642.0px;top:1488.8px;">)j<span class="dot">·</span>{<span class="dot">·</span><span class="dot">·</span>E<span class="dot">·</span></div>
<div class="t hx" style="left:1611px;top:1518.8px;color:#9a9a9a;">0010</div>
<div class="t hx" style="left:1703px;top:1518.8px;">00 c0 a6 06 40 00 40 06</div>
<div class="t hx" style="left:2094.2px;top:1518.8px;">e3 78 ac 10 2c 85 ac 10</div>
<div class="t hx" style="left:2501.2px;top:1518.8px;"><span class="dot">·</span><span class="dot">·</span><span class="dot">·</span><span class="dot">·</span>@<span class="dot">·</span>@<span class="dot">·</span></div>
<div class="t hx" style="left:2642.0px;top:1518.8px;"><span class="dot">·</span>x<span class="dot">·</span><span class="dot">·</span>,<span class="dot">·</span><span class="dot">·</span><span class="dot">·</span></div>
<div class="t hx" style="left:1611px;top:1548.8px;color:#9a9a9a;">0020</div>
<div class="t hx" style="left:1703px;top:1548.8px;">2c 01 00 16 c4 a1 14 4f</div>
<div class="t hx" style="left:2094.2px;top:1548.8px;">b6 4d 58 cd a2 62 80 18</div>
<div class="t hx" style="left:2501.2px;top:1548.8px;">,<span class="dot">·</span><span class="dot">·</span><span class="dot">·</span><span class="dot">·</span><span class="dot">·</span><span class="dot">·</span>O</div>
<div class="t hx" style="left:2642.0px;top:1548.8px;"><span class="dot">·</span>MX<span class="dot">·</span><span class="dot">·</span>b<span class="dot">·</span><span class="dot">·</span></div>
<div class="t hx" style="left:1611px;top:1578.8px;color:#9a9a9a;">0030</div>
<div class="t hx" style="left:1703px;top:1578.8px;">01 f5 b1 59 00 00 01 01</div>
<div class="t hx" style="left:2094.2px;top:1578.8px;">08 0a 18 f6 e5 51 83 cc</div>
<div class="t hx" style="left:2501.2px;top:1578.8px;"><span class="dot">·</span><span class="dot">·</span><span class="dot">·</span>Y<span class="dot">·</span><span class="dot">·</span><span class="dot">·</span><span class="dot">·</span></div>
<div class="t hx" style="left:2642.0px;top:1578.8px;"><span class="dot">·</span><span class="dot">·</span><span class="dot">·</span><span class="dot">·</span><span class="dot">·</span>Q<span class="dot">·</span><span class="dot">·</span></div>
<div class="t hx" style="left:1611px;top:1608.8px;color:#9a9a9a;">0040</div>
<div class="t hx" style="left:1703px;top:1608.8px;">c6 c3 d9 06 94 7c 0c 93</div>
<div class="t hx" style="left:2094.2px;top:1608.8px;">bc 22 c7 62 21 4c 97 87</div>
<div class="t hx" style="left:2501.2px;top:1608.8px;"><span class="dot">·</span><span class="dot">·</span><span class="dot">·</span><span class="dot">·</span><span class="dot">·</span>|<span class="dot">·</span><span class="dot">·</span></div>
<div class="t hx" style="left:2642.0px;top:1608.8px;"><span class="dot">·</span>&quot;<span class="dot">·</span>b!L<span class="dot">·</span><span class="dot">·</span></div>
<div class="t hx" style="left:1611px;top:1638.8px;color:#9a9a9a;">0050</div>
<div class="t hx" style="left:1703px;top:1638.8px;">90 e7 ab 67 52 53 9d b9</div>
<div class="t hx" style="left:2094.2px;top:1638.8px;">61 c9 89 e5 48 79 bd 25</div>
<div class="t hx" style="left:2501.2px;top:1638.8px;"><span class="dot">·</span><span class="dot">·</span><span class="dot">·</span>gRS<span class="dot">·</span><span class="dot">·</span></div>
<div class="t hx" style="left:2642.0px;top:1638.8px;">a<span class="dot">·</span><span class="dot">·</span><span class="dot">·</span>Hy<span class="dot">·</span>%</div>
<div class="t hx" style="left:1611px;top:1668.8px;color:#9a9a9a;">0060</div>
<div class="t hx" style="left:1703px;top:1668.8px;">74 64 8f e9 5c c4 93 07</div>
<div class="t hx" style="left:2094.2px;top:1668.8px;">4d 6d 6c 48 8a 43 c1 cf</div>
<div class="t hx" style="left:2501.2px;top:1668.8px;">td<span class="dot">·</span><span class="dot">·</span>\<span class="dot">·</span><span class="dot">·</span><span class="dot">·</span></div>
<div class="t hx" style="left:2642.0px;top:1668.8px;">MmlH<span class="dot">·</span>C<span class="dot">·</span><span class="dot">·</span></div>
<div class="t hx" style="left:1611px;top:1698.8px;color:#9a9a9a;">0070</div>
<div class="t hx" style="left:1703px;top:1698.8px;">b5 09 a6 cf f7 d7 58 87</div>
<div class="t hx" style="left:2094.2px;top:1698.8px;">2b 86 44 39 f5 04 56 65</div>
<div class="t hx" style="left:2501.2px;top:1698.8px;"><span class="dot">·</span><span class="dot">·</span><span class="dot">·</span><span class="dot">·</span><span class="dot">·</span><span class="dot">·</span>X<span class="dot">·</span></div>
<div class="t hx" style="left:2642.0px;top:1698.8px;">+<span class="dot">·</span>D9<span class="dot">·</span><span class="dot">·</span>Ve</div>
<div class="t hx" style="left:1611px;top:1728.8px;color:#9a9a9a;">0080</div>
<div class="t hx" style="left:1703px;top:1728.8px;">14 1e 28 4e 50 5a fd 05</div>
<div class="t hx" style="left:2094.2px;top:1728.8px;">02 62 45 ec c1 9e fe 43</div>
<div class="t hx" style="left:2501.2px;top:1728.8px;"><span class="dot">·</span><span class="dot">·</span>(NPZ<span class="dot">·</span><span class="dot">·</span></div>
<div class="t hx" style="left:2642.0px;top:1728.8px;"><span class="dot">·</span>bE<span class="dot">·</span><span class="dot">·</span><span class="dot">·</span><span class="dot">·</span>C</div>
<div class="t hx" style="left:1611px;top:1758.8px;color:#9a9a9a;">0090</div>
<div class="t hx" style="left:1703px;top:1758.8px;">76 bb a7 3c 01 e5 fc 13</div>
<div class="t hx" style="left:2094.2px;top:1758.8px;">4c ec d1 a6 7a 5c 15 5a</div>
<div class="t hx" style="left:2501.2px;top:1758.8px;">v<span class="dot">·</span><span class="dot">·</span>&lt;<span class="dot">·</span><span class="dot">·</span><span class="dot">·</span><span class="dot">·</span></div>
<div class="t hx" style="left:2642.0px;top:1758.8px;">L<span class="dot">·</span><span class="dot">·</span><span class="dot">·</span>z\<span class="dot">·</span>Z</div>
<div class="t hx" style="left:1611px;top:1788.8px;color:#9a9a9a;">00a0</div>
<div class="t hx" style="left:1703px;top:1788.8px;">a7 bd c3 17 c6 59 91 07</div>
<div class="t hx" style="left:2094.2px;top:1788.8px;">cb 37 2d 3f 33 bc 94 1c</div>
<div class="t hx" style="left:2501.2px;top:1788.8px;"><span class="dot">·</span><span class="dot">·</span><span class="dot">·</span><span class="dot">·</span><span class="dot">·</span>Y<span class="dot">·</span><span class="dot">·</span></div>
<div class="t hx" style="left:2642.0px;top:1788.8px;"><span class="dot">·</span>7-?3<span class="dot">·</span><span class="dot">·</span><span class="dot">·</span></div>
<div class="t hx" style="left:1611px;top:1818.8px;color:#9a9a9a;">00b0</div>
<div class="t hx" style="left:1703px;top:1818.8px;">30 e3 fe c0 f0 39 2c 95</div>
<div class="t hx" style="left:2094.2px;top:1818.8px;">b6 f0 7b e9 2a 66 ef be</div>
<div class="t hx" style="left:2501.2px;top:1818.8px;">0<span class="dot">·</span><span class="dot">·</span><span class="dot">·</span><span class="dot">·</span>9,<span class="dot">·</span></div>
<div class="t hx" style="left:2642.0px;top:1818.8px;"><span class="dot">·</span><span class="dot">·</span>{<span class="dot">·</span>*f<span class="dot">·</span><span class="dot">·</span></div>
<div class="t hx" style="left:1611px;top:1848.8px;color:#9a9a9a;">00c0</div>
<div class="t hx" style="left:1703px;top:1848.8px;">5d 6b a8 f4 8e 17 e1 53</div>
<div class="t hx" style="left:2094.2px;top:1848.8px;">c2 43 07 6b 13 c7</div>
<div class="t hx" style="left:2501.2px;top:1848.8px;">]k<span class="dot">·</span><span class="dot">·</span><span class="dot">·</span><span class="dot">·</span><span class="dot">·</span>S</div>
<div class="t hx" style="left:2642.0px;top:1848.8px;"><span class="dot">·</span>C<span class="dot">·</span>k<span class="dot">·</span><span class="dot">·</span></div>
</body></html>
